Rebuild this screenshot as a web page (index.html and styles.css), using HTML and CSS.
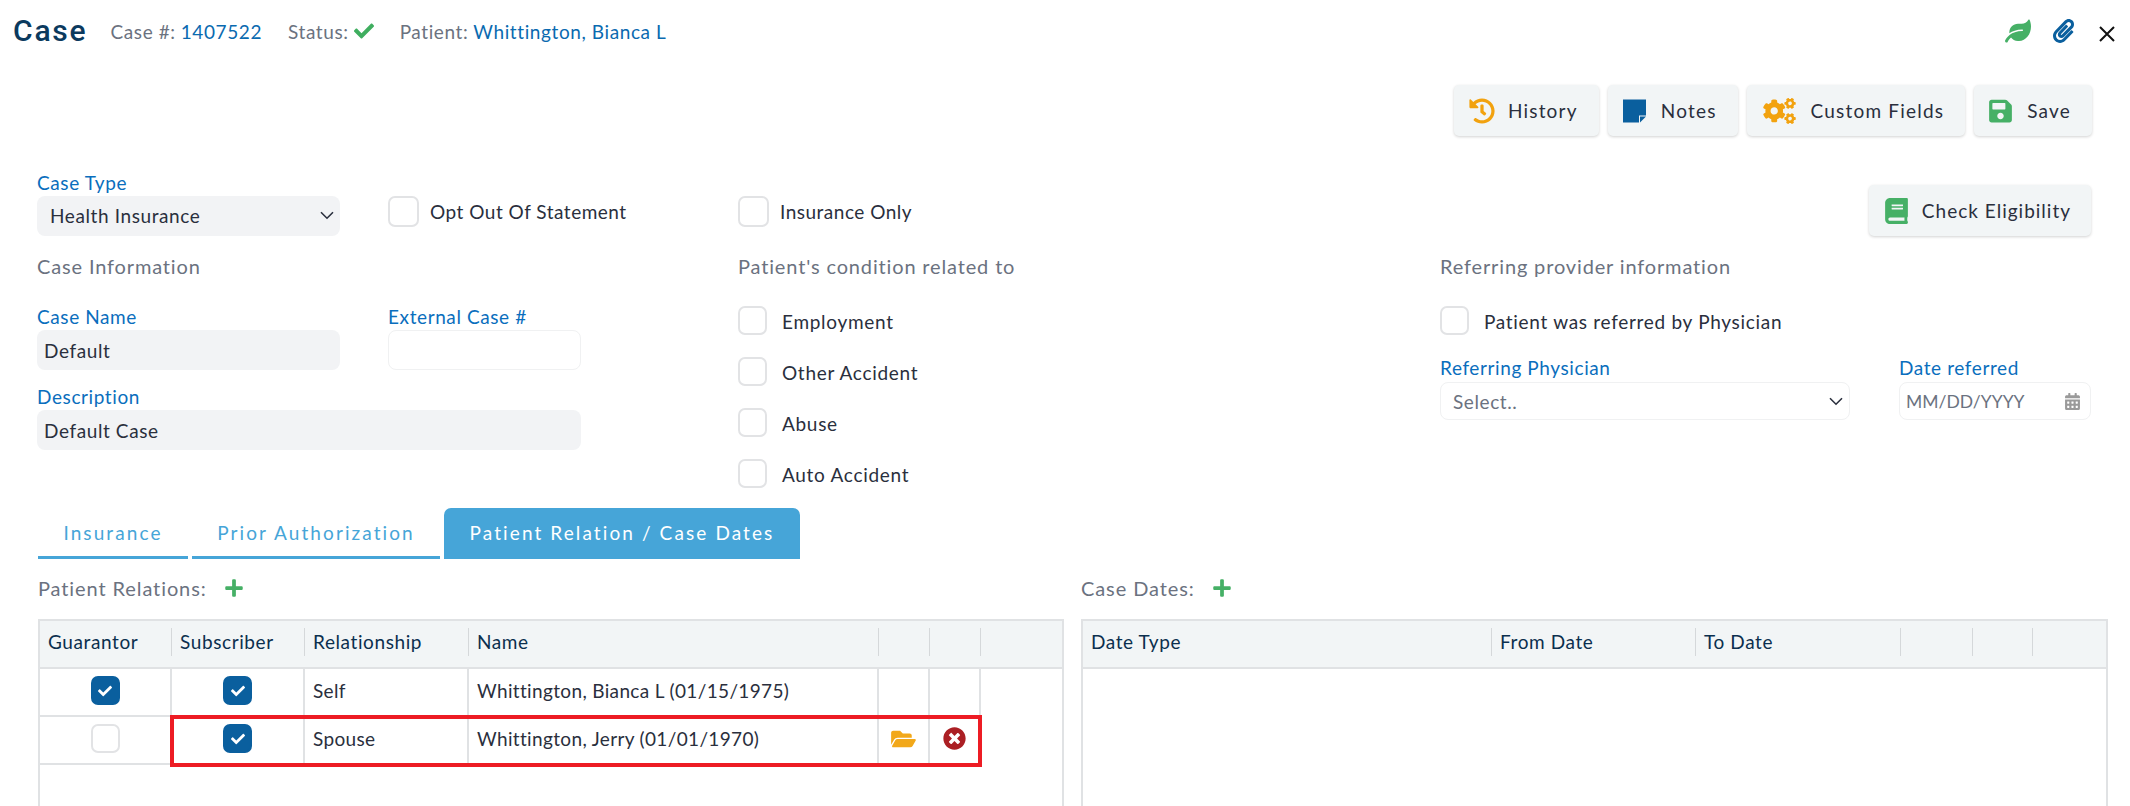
FILE: index.html
```html
<!DOCTYPE html>
<html lang="en">
<head>
<meta charset="utf-8">
<title>Case</title>
<link rel="stylesheet" href="styles.css">
</head>
<body>
<svg class="defs" aria-hidden="true">
<symbol id="i-check" viewBox="0 0 512 512"><path d="M173.898 439.404l-166.4-166.4c-9.997-9.997-9.997-26.206 0-36.204l36.203-36.204c9.997-9.998 26.207-9.998 36.204 0L192 312.69 432.095 72.596c9.997-9.997 26.207-9.997 36.204 0l36.203 36.204c9.997 9.997 9.997 26.206 0 36.204l-294.4 294.401c-9.998 9.997-26.207 9.997-36.204-.001z"/></symbol>
<symbol id="i-plus" viewBox="0 0 448 512"><path d="M416 208H272V64c0-17.67-14.33-32-32-32h-32c-17.67 0-32 14.33-32 32v144H32c-17.67 0-32 14.33-32 32v32c0 17.67 14.33 32 32 32h144v144c0 17.67 14.33 32 32 32h32c17.67 0 32-14.33 32-32V304h144c17.67 0 32-14.33 32-32v-32c0-17.67-14.33-32-32-32z"/></symbol>
<symbol id="i-times" viewBox="0 0 512 512"><path d="M256 8C119 8 8 119 8 256s111 248 248 248 248-111 248-248S393 8 256 8zm121.6 313.1c4.7 4.7 4.7 12.3 0 17L338 377.6c-4.7 4.7-12.3 4.7-17 0L256 312l-65.1 65.6c-4.7 4.7-12.3 4.7-17 0L134.4 338c-4.7-4.7-4.7-12.3 0-17l65.6-65-65.6-65.1c-4.7-4.7-4.7-12.3 0-17l39.6-39.6c4.7-4.7 12.3-4.7 17 0l65 65.7 65.1-65.6c4.7-4.7 12.3-4.7 17 0l39.6 39.6c4.7 4.7 4.7 12.3 0 17L312 256l65.6 65.1z"/></symbol>
<symbol id="i-folder" viewBox="0 0 576 512"><path d="M572.694 292.093L500.27 416.248A63.997 63.997 0 0 1 444.989 448H45.025c-18.523 0-30.064-20.093-20.731-36.093l72.424-124.155A64 64 0 0 1 152 256h399.964c18.523 0 30.064 20.093 20.73 36.093zM152 224h328v-48c0-26.51-21.49-48-48-48H272l-64-64H48C21.49 64 0 85.49 0 112v278.046l69.077-118.418C86.214 242.25 117.989 224 152 224z"/></symbol>
<symbol id="i-history" viewBox="0 0 512 512"><path d="M504 255.531c.253 136.64-111.18 248.372-247.82 248.468-59.015.042-113.223-20.53-155.822-54.911-11.077-8.94-11.905-25.541-1.839-35.607l11.267-11.267c8.609-8.609 22.353-9.551 31.891-1.984C173.062 425.135 212.781 440 256 440c101.705 0 184-82.311 184-184 0-101.705-82.311-184-184-184-48.814 0-93.149 18.969-126.068 49.932l50.754 50.754c10.08 10.08 2.941 27.314-11.313 27.314H24c-8.837 0-16-7.163-16-16V38.627c0-14.254 17.234-21.393 27.314-11.314l49.372 49.372C129.209 34.136 189.552 8 256 8c136.81 0 247.747 110.78 248 247.531zm-180.912 78.784l9.823-12.63c8.138-10.463 6.253-25.542-4.21-33.679L288 256.349V152c0-13.255-10.745-24-24-24h-16c-13.255 0-24 10.745-24 24v135.651l65.409 50.874c10.463 8.137 25.541 6.253 33.679-4.21z"/></symbol>
<symbol id="i-save" viewBox="0 0 448 512"><path d="M433.941 129.941l-83.882-83.882A48 48 0 0 0 316.118 32H48C21.49 32 0 53.49 0 80v352c0 26.51 21.49 48 48 48h352c26.51 0 48-21.49 48-48V163.882a48 48 0 0 0-14.059-33.941zM224 416c-35.346 0-64-28.654-64-64 0-35.346 28.654-64 64-64s64 28.654 64 64c0 35.346-28.654 64-64 64zm96-304.52V212c0 6.627-5.373 12-12 12H76c-6.627 0-12-5.373-12-12V108c0-6.627 5.373-12 12-12h228.52c3.183 0 6.235 1.264 8.485 3.515l3.48 3.48A11.996 11.996 0 0 1 320 111.48z"/></symbol>
<symbol id="i-note" viewBox="0 0 23 23"><path d="M0 0h23v16h-7v7H0z"/><path d="M17 17h6l-6 6z"/></symbol>
<symbol id="i-cogs" viewBox="0 0 640 512"><path d="M512.1 191l-8.2 14.3c-3 5.3-9.4 7.5-15.1 5.4-11.8-4.4-22.6-10.7-32.1-18.6-4.6-3.8-5.8-10.5-2.8-15.7l8.2-14.3c-6.9-8-12.3-17.3-15.9-27.4h-16.5c-6 0-11.2-4.3-12.2-10.3-2-12-2.1-24.6 0-37.1 1-6 6.2-10.4 12.2-10.4h16.5c3.6-10.1 9-19.4 15.9-27.4l-8.2-14.3c-3-5.2-1.9-11.9 2.8-15.7 9.5-7.9 20.4-14.2 32.1-18.6 5.7-2.1 12.1.1 15.1 5.4l8.2 14.3c10.5-1.9 21.2-1.9 31.7 0L552 6.3c3-5.3 9.4-7.5 15.1-5.4 11.8 4.4 22.6 10.7 32.1 18.6 4.6 3.8 5.8 10.5 2.8 15.7l-8.2 14.3c6.9 8 12.3 17.3 15.9 27.4h16.5c6 0 11.2 4.3 12.2 10.3 2 12 2.1 24.6 0 37.1-1 6-6.2 10.4-12.2 10.4h-16.5c-3.6 10.1-9 19.4-15.9 27.4l8.2 14.3c3 5.2 1.9 11.9-2.8 15.7-9.5 7.9-20.4 14.2-32.1 18.6-5.7 2.1-12.1-.1-15.1-5.4l-8.2-14.3c-10.4 1.9-21.2 1.9-31.7 0zm-10.5-58.8c38.5 29.6 82.4-14.3 52.8-52.8-38.5-29.7-82.4 14.3-52.8 52.8zM386.3 286.1l33.7 16.8c10.1 5.8 14.5 18.1 10.5 29.1-8.9 24.2-26.4 46.4-42.6 65.8-7.4 8.9-20.2 11.1-30.3 5.3l-29.1-16.8c-16 13.7-34.6 24.6-54.9 31.7v33.6c0 11.6-8.3 21.6-19.7 23.6-24.6 4.2-50.4 4.4-75.9 0-11.5-2-20-11.9-20-23.6V418c-20.3-7.2-38.9-18-54.9-31.7L74 403c-10 5.8-22.9 3.6-30.3-5.3-16.2-19.4-33.3-41.6-42.2-65.7-4-10.9.4-23.2 10.5-29.1l33.3-16.8c-3.9-20.9-3.9-42.4 0-63.4L12 205.8c-10.1-5.8-14.6-18.1-10.5-29 8.9-24.2 26-46.4 42.2-65.8 7.4-8.9 20.2-11.1 30.3-5.3l29.1 16.8c16-13.7 34.6-24.6 54.9-31.7V57.1c0-11.5 8.2-21.5 19.6-23.5 24.6-4.2 50.5-4.4 76-.1 11.5 2 20 11.9 20 23.6v33.6c20.3 7.2 38.9 18 54.9 31.7l29.1-16.8c10-5.8 22.9-3.6 30.3 5.3 16.2 19.4 33.2 41.6 42.1 65.8 4 10.9.1 23.2-10 29.1l-33.7 16.8c3.9 21 3.9 42.5 0 63.5zm-117.6 21.1c59.2-77-28.7-164.9-105.7-105.7-59.2 77 28.7 164.9 105.7 105.7zm243.4 182.7l-8.2 14.3c-3 5.3-9.4 7.5-15.1 5.4-11.8-4.4-22.6-10.7-32.1-18.6-4.6-3.8-5.8-10.5-2.8-15.7l8.2-14.3c-6.9-8-12.3-17.3-15.9-27.4h-16.5c-6 0-11.2-4.3-12.2-10.3-2-12-2.1-24.6 0-37.1 1-6 6.2-10.4 12.2-10.4h16.5c3.6-10.1 9-19.4 15.9-27.4l-8.2-14.3c-3-5.2-1.9-11.9 2.8-15.7 9.5-7.9 20.4-14.2 32.1-18.6 5.7-2.1 12.1.1 15.1 5.4l8.2 14.3c10.5-1.9 21.2-1.9 31.7 0l8.2-14.3c3-5.3 9.4-7.5 15.1-5.4 11.8 4.4 22.6 10.7 32.1 18.6 4.6 3.8 5.8 10.5 2.8 15.7l-8.2 14.3c6.9 8 12.3 17.3 15.9 27.4h16.5c6 0 11.2 4.3 12.2 10.3 2 12 2.1 24.6 0 37.1-1 6-6.2 10.4-12.2 10.4h-16.5c-3.6 10.1-9 19.4-15.9 27.4l8.2 14.3c3 5.2 1.9 11.9-2.8 15.7-9.5 7.9-20.4 14.2-32.1 18.6-5.7 2.1-12.1-.1-15.1-5.4l-8.2-14.3c-10.4 1.9-21.2 1.9-31.7 0zM501.6 431c38.5 29.6 82.4-14.3 52.8-52.8-38.5-29.6-82.4 14.3-52.8 52.8z"/></symbol>
<symbol id="i-book" viewBox="0 0 448 512"><path d="M448 360V24c0-13.3-10.7-24-24-24H96C43 0 0 43 0 96v320c0 53 43 96 96 96h328c13.3 0 24-10.7 24-24v-16c0-7.5-3.5-14.3-8.9-18.7-4.2-15.4-4.2-59.3 0-74.7 5.4-4.3 8.9-11.1 8.9-18.6zM128 134c0-3.3 2.7-6 6-6h212c3.3 0 6 2.7 6 6v20c0 3.3-2.7 6-6 6H134c-3.3 0-6-2.7-6-6v-20zm0 64c0-3.3 2.7-6 6-6h212c3.3 0 6 2.7 6 6v20c0 3.3-2.7 6-6 6H134c-3.3 0-6-2.7-6-6v-20zm253.4 250H96c-17.7 0-32-14.3-32-32 0-17.6 14.4-32 32-32h285.4c-1.9 17.1-1.9 46.9 0 64z"/></symbol>
<symbol id="i-leaf" viewBox="0 0 576 512"><path d="M546.2 9.7c-5.6-12.5-21.6-13-28.3-1.2C486.9 62.4 431.4 96 368 96h-80C182 96 96 182 96 288c0 7 .8 13.7 1.5 20.5C161.3 262.8 253.4 224 384 224c8.8 0 16 7.2 16 16s-7.2 16-16 16C132.6 256 26 410.1 2.4 468c-6.6 16.3 1.2 34.9 17.5 41.6 16.4 6.8 35-1.1 41.8-17.3 1.5-3.6 20.9-47.9 71.9-90.6 32.4 43.9 94 85.8 174.9 77.2C465.5 467.5 576 326.7 576 154.3c0-50.2-10.8-102.2-29.8-144.6z"/></symbol>
<symbol id="i-clip" viewBox="0 0 448 512"><path d="M43.246 466.142c-58.43-60.289-57.341-157.511 1.386-217.581L254.392 34c44.316-45.332 116.351-45.336 160.671 0 43.89 44.894 43.943 117.329 0 162.276L232.214 383.128c-29.855 30.537-78.633 30.111-107.982-.998-28.275-29.97-27.368-77.473 1.452-106.953l143.743-146.835c6.182-6.314 16.312-6.422 22.626-.241l22.861 22.379c6.315 6.182 6.422 16.312.241 22.626L171.427 319.927c-4.932 5.045-5.236 13.428-.648 18.292 4.372 4.634 11.245 4.711 15.688.165l182.849-186.851c19.613-20.062 19.613-52.725-.011-72.798-19.189-19.627-49.957-19.637-69.154 0L90.39 293.295c-34.763 35.56-35.299 93.12-1.191 128.313 34.01 35.093 88.985 35.137 123.058.286l172.06-175.999c6.177-6.319 16.307-6.433 22.626-.256l22.877 22.364c6.319 6.177 6.434 16.307.256 22.626l-172.06 175.998c-59.576 60.938-155.943 60.216-214.77-.485z"/></symbol>
<symbol id="i-cal" viewBox="0 0 448 512"><path d="M0 464c0 26.5 21.5 48 48 48h352c26.5 0 48-21.5 48-48V192H0v272zm320-196c0-6.6 5.4-12 12-12h40c6.6 0 12 5.4 12 12v40c0 6.6-5.4 12-12 12h-40c-6.6 0-12-5.4-12-12v-40zm0 128c0-6.6 5.4-12 12-12h40c6.6 0 12 5.4 12 12v40c0 6.6-5.4 12-12 12h-40c-6.6 0-12-5.4-12-12v-40zM192 268c0-6.6 5.4-12 12-12h40c6.6 0 12 5.4 12 12v40c0 6.6-5.4 12-12 12h-40c-6.6 0-12-5.4-12-12v-40zm0 128c0-6.6 5.4-12 12-12h40c6.6 0 12 5.4 12 12v40c0 6.6-5.4 12-12 12h-40c-6.6 0-12-5.4-12-12v-40zM64 268c0-6.6 5.4-12 12-12h40c6.6 0 12 5.4 12 12v40c0 6.6-5.4 12-12 12H76c-6.6 0-12-5.4-12-12v-40zm0 128c0-6.6 5.4-12 12-12h40c6.6 0 12 5.4 12 12v40c0 6.6-5.4 12-12 12H76c-6.6 0-12-5.4-12-12v-40zM400 64h-48V16c0-8.8-7.2-16-16-16h-32c-8.8 0-16 7.2-16 16v48H160V16c0-8.8-7.2-16-16-16h-32c-8.8 0-16 7.2-16 16v48H48C21.5 64 0 85.5 0 112v48h448v-48c0-26.5-21.5-48-48-48z"/></symbol>
<symbol id="i-chev" viewBox="0 0 14 9"><path d="M1 1.2l6 6 6-6" fill="none" stroke="currentColor" stroke-width="1.6"/></symbol>
<symbol id="i-x" viewBox="0 0 16 16"><path d="M1 1l14 14M15 1L1 15" fill="none" stroke="currentColor" stroke-width="2"/></symbol>
</svg>

<div class="page">
  <header class="head">
    <h1 class="title">Case</h1>
    <span class="meta">Case #: <a class="link">1407522</a></span>
    <span class="meta">Status: <svg class="ic-status"><use href="#i-check"/></svg></span>
    <span class="meta">Patient: <a class="link">Whittington, Bianca L</a></span>
    <div class="head-icons">
      <svg class="ic-leaf"><use href="#i-leaf"/></svg>
      <svg class="ic-clip"><use href="#i-clip"/></svg>
      <svg class="ic-x"><use href="#i-x"/></svg>
    </div>
  </header>

  <div class="toolbar">
    <button class="btn"><svg class="ic-hist orange"><use href="#i-history"/></svg>History</button>
    <button class="btn"><svg class="ic-btn blue"><use href="#i-note"/></svg>Notes</button>
    <button class="btn"><svg class="ic-cogs orange"><use href="#i-cogs"/></svg>Custom Fields</button>
    <button class="btn"><svg class="ic-btn green"><use href="#i-save"/></svg>Save</button>
  </div>

  <section class="form-row top">
    <div class="top-left">
      <div class="field w-type">
        <label class="lbl">Case Type</label>
        <div class="ctl filled">Health Insurance<svg class="chev"><use href="#i-chev"/></svg></div>
      </div>
      <label class="chk-line"><span class="box"></span>Opt Out Of Statement</label>
    </div>
    <div class="top-mid"><label class="chk-line"><span class="box"></span>Insurance Only</label></div>
    <div class="top-right">
      <button class="btn"><svg class="ic-btn green"><use href="#i-book"/></svg>Check Eligibility</button>
    </div>
  </section>

  <section class="form-row info">
    <div>
      <h2 class="sec">Case Information</h2>
      <div class="case-grid">
        <div class="field">
          <label class="lbl">Case Name</label>
          <div class="ctl filled compact">Default</div>
        </div>
        <div class="field">
          <label class="lbl">External Case #</label>
          <div class="ctl outline"></div>
        </div>
        <div class="field span2">
          <label class="lbl">Description</label>
          <div class="ctl filled compact">Default Case</div>
        </div>
      </div>
    </div>
    <div>
      <h2 class="sec">Patient's condition related to</h2>
      <div class="chk-list">
        <label class="chk-row"><span class="box"></span>Employment</label>
        <label class="chk-row"><span class="box"></span>Other Accident</label>
        <label class="chk-row"><span class="box"></span>Abuse</label>
        <label class="chk-row"><span class="box"></span>Auto Accident</label>
      </div>
    </div>
    <div>
      <h2 class="sec">Referring provider information</h2>
      <div class="chk-list">
        <label class="chk-row"><span class="box"></span>Patient was referred by Physician</label>
      </div>
      <div class="ref-grid">
        <div class="field">
          <label class="lbl">Referring Physician</label>
          <div class="ctl outline short muted">Select..<svg class="chev"><use href="#i-chev"/></svg></div>
        </div>
        <div class="field">
          <label class="lbl">Date referred</label>
          <div class="ctl outline short muted date">MM/DD/YYYY<svg class="ic-cal"><use href="#i-cal"/></svg></div>
        </div>
      </div>
    </div>
  </section>

  <nav class="tabs">
    <a class="tab t-ins">Insurance</a>
    <a class="tab t-auth">Prior Authorization</a>
    <a class="tab t-rel active">Patient Relation / Case Dates</a>
  </nav>

  <section class="panels">
    <div>
      <div class="panel-head">Patient Relations: <svg class="ic-plus"><use href="#i-plus"/></svg></div>
      <div class="grid-box">
        <div class="g-head cols-rel">
          <div class="hc">Guarantor</div><div class="hc">Subscriber</div><div class="hc">Relationship</div><div class="hc">Name</div><div class="hc"></div><div class="hc"></div>
        </div>
        <div class="g-row cols-rel">
          <div class="c center"><span class="box on"><svg class="tick"><use href="#i-check"/></svg></span></div>
          <div class="c center"><span class="box on"><svg class="tick"><use href="#i-check"/></svg></span></div>
          <div class="c">Self</div>
          <div class="c">Whittington, Bianca L (01/15/1975)</div>
          <div class="c"></div><div class="c"></div>
        </div>
        <div class="g-row cols-rel">
          <div class="c center"><span class="box"></span></div>
          <div class="c center"><span class="box on"><svg class="tick"><use href="#i-check"/></svg></span></div>
          <div class="c">Spouse</div>
          <div class="c">Whittington, Jerry (01/01/1970)</div>
          <div class="c center"><svg class="ic-folder"><use href="#i-folder"/></svg></div>
          <div class="c center"><svg class="ic-times"><use href="#i-times"/></svg></div>
          <div class="callout"></div>
        </div>
      </div>
    </div>
    <div>
      <div class="panel-head">Case Dates: <svg class="ic-plus"><use href="#i-plus"/></svg></div>
      <div class="grid-box">
        <div class="g-head cols-date">
          <div class="hc">Date Type</div><div class="hc">From Date</div><div class="hc">To Date</div><div class="hc"></div><div class="hc"></div>
        </div>
      </div>
    </div>
  </section>
</div>
</body>
</html>
```

FILE: styles.css
```css
* { box-sizing: border-box; }
html, body { margin: 0; padding: 0; background: #fff; }
body { font-family: "Lato", "Open Sans", sans-serif; font-size: 19px; letter-spacing: .6px; color: #2a2f3d; }
.defs { display: none; }
.page { width: 2130px; height: 806px; overflow: hidden; }

.head { height: 62px; display: flex; align-items: center; padding: 0 15px 0 13px; color: #6b7280; }
.title { margin: 0 23px 0 0; font: 500 30px/1 "Roboto", sans-serif; letter-spacing: 1.8px; color: #0b3a5e; }
.meta { margin-right: 26px; display: inline-flex; align-items: center; gap: 5px; }
.link { color: #0a6ab0; }
.ic-status { width: 20px; height: 20px; fill: #3fae5f; }
.head-icons { margin-left: auto; display: flex; align-items: center; }
.ic-leaf { width: 26px; height: 24px; fill: #46b066; }
.ic-clip { width: 21px; height: 24px; fill: #0a5f9e; margin-left: 22px; }
.ic-x { width: 16px; height: 16px; color: #111; margin-left: 25px; margin-top: 5px; }

.toolbar { margin-top: 23px; height: 51px; display: flex; justify-content: flex-end; gap: 9px; padding-right: 38px; }
.btn { height: 51px; display: inline-flex; align-items: center; gap: 15px; padding: 0 21px 0 15px; border: 0; border-radius: 5px; background: #f2f5f6; box-shadow: 0 1px 3px rgba(0,0,0,.18); font: inherit; color: #2a2f3d; letter-spacing: 1.2px; }
.ic-btn { width: 23px; height: 26px; flex: none; }
.ic-hist { width: 26px; height: 26px; flex: none; margin-right: -2px; }
.ic-cogs { width: 35px; height: 26px; flex: none; margin-right: -1px; }
.orange { fill: #f2a20f; }
.blue { fill: #0a5f9e; }
.green { fill: #46b066; }

.form-row { display: grid; grid-template-columns: 701px 702px 1fr; padding: 0 39px 0 37px; }
.top { margin-top: 36px; height: 64px; }
.top-left { display: flex; gap: 48px; }
.w-type { width: 303px; }
.w-type .ctl { padding-bottom: 2px; }
.field { display: flex; flex-direction: column; gap: 2px; }
.span2 { grid-column: span 2; }
.lbl { display: block; line-height: 22px; color: #0a6ebd; }
.ctl { height: 40px; display: flex; align-items: center; justify-content: space-between; padding: 0 6px 0 13px; border-radius: 8px; }
.filled { background: #f2f3f5; }
.compact { padding-left: 7px; }
.outline { background: #fff; border: 1px solid #f0f1f2; }
.short { height: 38px; margin-top: 1px; padding-left: 12px; }
.muted { color: #6b7280; }
.date { padding: 0 10px 0 6px; font-size: 17.5px; letter-spacing: 0; }
.chev { width: 14px; height: 9px; color: #2a2f3d; }
.ic-cal { width: 15px; height: 17px; fill: #9a9a9a; }

.box { width: 29px; height: 29px; flex: none; display: inline-flex; align-items: center; justify-content: center; background: #fff; border: 2px solid #e2e3e5; border-radius: 7px; }
.box.on { background: #0a5f9e; border-color: #0a5f9e; }
.tick { width: 14px; height: 14px; fill: #fff; }
.chk-line { display: flex; align-items: flex-start; gap: 11px; padding-top: 24px; line-height: 31px; letter-spacing: .5px; }
.chk-line .box { width: 31px; height: 31px; }
.top-right { display: flex; justify-content: flex-end; align-items: flex-end; }
.top-right .btn { letter-spacing: 1px; padding-left: 16px; padding-right: 20px; gap: 14px; }

.info { margin-top: 20px; }
.sec { margin: -1px 0 29px; font-size: 20px; font-weight: 400; line-height: 22px; color: #6b7280; letter-spacing: .85px; }
.case-grid { display: grid; grid-template-columns: 303px 193px; column-gap: 48px; row-gap: 16px; }
.chk-list { display: flex; flex-direction: column; gap: 22px; }
.chk-row { display: flex; align-items: flex-start; gap: 15px; height: 29px; line-height: 31px; letter-spacing: .7px; }
.ref-grid { display: grid; grid-template-columns: 410px 192px; column-gap: 49px; margin-top: 22px; }

.tabs { display: flex; gap: 4px; margin: 20px 0 0 38px; height: 51px; }
.tab { display: flex; align-items: center; justify-content: center; color: #46a5d8; border-bottom: 3px solid #46a5d8; letter-spacing: 2.1px; }
.t-ins { width: 150px; }
.t-auth { width: 248px; }
.t-rel { width: 356px; }
.tab.active { background: #46a5d8; color: #fff; border-radius: 7px 7px 0 0; }

.panels { display: grid; grid-template-columns: 1026px 1027px; column-gap: 17px; margin: 18px 0 0 38px; }
.panel-head { height: 22px; display: flex; align-items: center; gap: 18px; font-size: 20px; letter-spacing: .9px; color: #6b7280; }
.ic-plus { width: 18px; height: 20px; fill: #46b066; }
.grid-box { margin-top: 20px; height: 300px; border: 2px solid #e0e2e4; border-bottom: 0; }
.g-head { height: 48px; padding: 7px 0 9px; background: #f2f5f6; border-bottom: 2px solid #e0e2e4; color: #0b2f4e; }
.hc { height: 28px; padding-left: 8px; display: flex; align-items: center; border-right: 1px solid #d5d8da; padding-bottom: 2px; }
.cols-rel { display: grid; grid-template-columns: 132px 133px 164px 410px 51px 51px; }
.cols-date { display: grid; grid-template-columns: 409px 204px 205px 72px 60px; }
.g-row { position: relative; width: 941px; height: 48px; border-bottom: 2px solid #e0e2e4; }
.c { display: flex; align-items: center; padding: 0 8px 3px; border-right: 2px solid #e0e2e4; letter-spacing: .35px; }
.center { justify-content: center; padding: 0 0 3px; }
.ic-folder { width: 27px; height: 22px; fill: #f2a81a; }
.ic-times { width: 23px; height: 23px; fill: #ab1f24; }
.callout { position: absolute; left: 130px; top: -2px; width: 812px; height: 52px; border: 4px solid #ed1c24; pointer-events: none; }
```
